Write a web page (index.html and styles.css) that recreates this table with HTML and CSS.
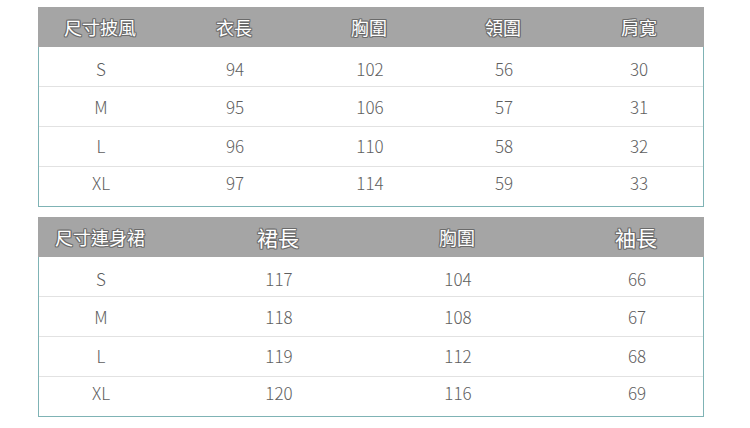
FILE: index.html
```html
<!DOCTYPE html>
<html lang="zh-Hant">
<head>
<meta charset="utf-8">
<link rel="stylesheet" href="styles.css">
</head>
<body>
<div class="page">
  <section class="table t1">
    <div class="head row">
      <div class="cell">尺寸披風</div>
      <div class="cell">衣長</div>
      <div class="cell">胸圍</div>
      <div class="cell">領圍</div>
      <div class="cell">肩寬</div>
    </div>
    <div class="body">
      <div class="row"><div class="cell">S</div><div class="cell">94</div><div class="cell">102</div><div class="cell">56</div><div class="cell">30</div></div>
      <div class="row"><div class="cell">M</div><div class="cell">95</div><div class="cell">106</div><div class="cell">57</div><div class="cell">31</div></div>
      <div class="row"><div class="cell">L</div><div class="cell">96</div><div class="cell">110</div><div class="cell">58</div><div class="cell">32</div></div>
      <div class="row"><div class="cell">XL</div><div class="cell">97</div><div class="cell">114</div><div class="cell">59</div><div class="cell">33</div></div>
    </div>
  </section>
  <section class="table t2">
    <div class="head row">
      <div class="cell">尺寸連身裙</div>
      <div class="cell big">裙長</div>
      <div class="cell">胸圍</div>
      <div class="cell big">袖長</div>
    </div>
    <div class="body">
      <div class="row"><div class="cell">S</div><div class="cell">117</div><div class="cell">104</div><div class="cell">66</div></div>
      <div class="row"><div class="cell">M</div><div class="cell">118</div><div class="cell">108</div><div class="cell">67</div></div>
      <div class="row"><div class="cell">L</div><div class="cell">119</div><div class="cell">112</div><div class="cell">68</div></div>
      <div class="row"><div class="cell">XL</div><div class="cell">120</div><div class="cell">116</div><div class="cell">69</div></div>
    </div>
  </section>
</div>
</body>
</html>
```

FILE: styles.css
```css
* { box-sizing: border-box; }
html, body { margin: 0; padding: 0; background: #fff; }
body {
  font-family: "Noto Sans CJK TC", "Noto Sans", sans-serif;
}
.page {
  width: 750px;
  padding: 7px 46px 0 38px;
  display: flex;
  flex-direction: column;
  gap: 10px;
}
.table { width: 666px; }
.row {
  display: grid;
  align-items: center;
  justify-items: center;
}
.t1 .row { grid-template-columns: 124px 144px 126px 142px 1fr; }
.t2 .row { grid-template-columns: 124px 232px 126px 184px; }
.t2 .row .cell:last-child { padding-left: 48px; justify-self: stretch; text-align: center; }
.head {
  height: 40px;
  background: #a5a5a5;
  color: #fff;
  font-size: 18px;
  font-weight: 400;
  text-shadow:
    1px 0 0 #6a6a6a, -1px 0 0 #6a6a6a, 0 1px 0 #6a6a6a, 0 -1px 0 #6a6a6a,
    1px 1px 0 #777, -1px -1px 0 #777, 1px -1px 0 #777, -1px 1px 0 #777;
}
.head .big { font-size: 21px; }
.body {
  border: 1px solid #7fb3b5;
  border-top: 0;
}
.body .row {
  height: 40px;
  border-bottom: 1px solid #e2e2e2;
  color: #5e5e5e;
  font-size: 17px;
  font-weight: 300;
}
.body .row:nth-child(1) { padding-top: 3px; }
.body .row:nth-child(3) { padding-bottom: 3px; }
.body .row:last-child { border-bottom: 0; height: 39px; padding-bottom: 8px; }
```
